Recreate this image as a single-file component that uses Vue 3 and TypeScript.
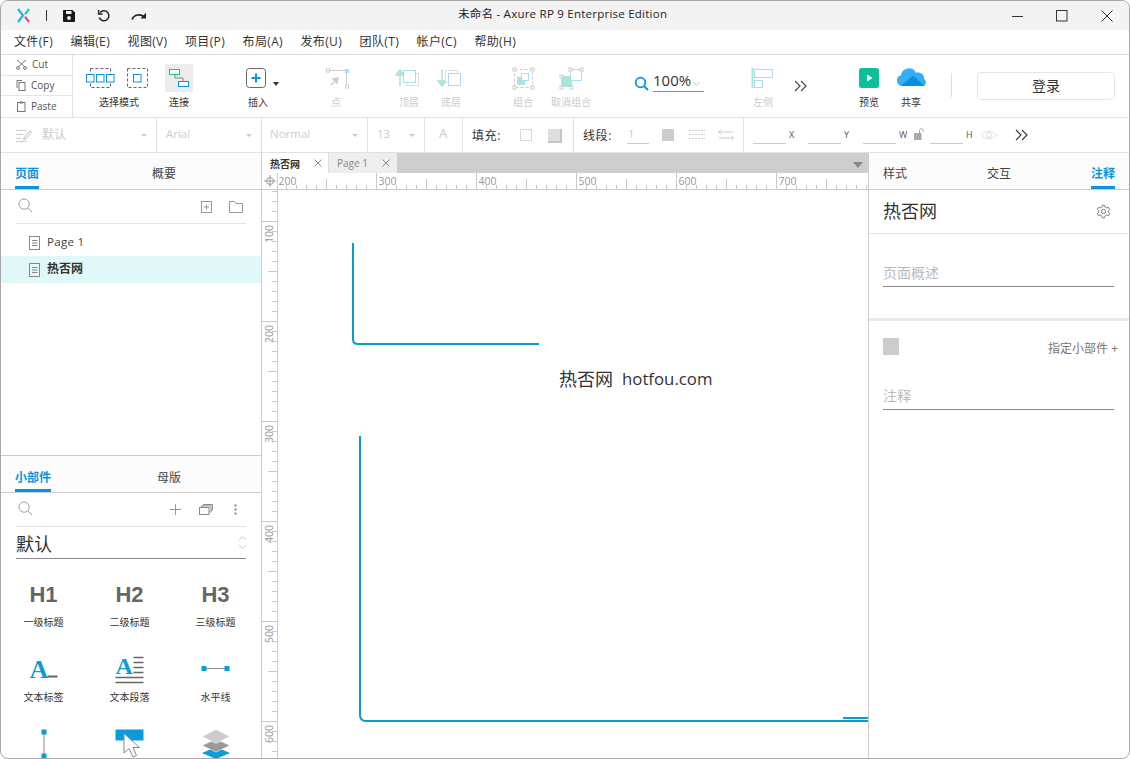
<script setup lang="ts">
const menus = ['文件(F)', '编辑(E)', '视图(V)', '项目(P)', '布局(A)', '发布(U)', '团队(T)', '帐户(C)', '帮助(H)']

const hTicks: { x: number; h: number; label?: number }[] = []
for (let v = 210; v < 800; v += 10) {
  const x = v - 202
  if (v % 100 === 0) hTicks.push({ x, h: 16, label: v })
  else if (v % 50 === 0) hTicks.push({ x, h: 10 })
  else hTicks.push({ x, h: 4 })
}
hTicks.unshift({ x: -2, h: 16, label: 200 })

const vTicks: { y: number; w: number; label?: number }[] = []
for (let v = 70; v < 640; v += 10) {
  const y = v - 69
  if (v % 100 === 0) vTicks.push({ y, w: 15, label: v })
  else if (v % 50 === 0) vTicks.push({ y, w: 9 })
  else vTicks.push({ y, w: 5 })
}

const headings = [
  { h: 'H1', label: '一级标题' },
  { h: 'H2', label: '二级标题' },
  { h: 'H3', label: '三级标题' }
]
</script>

<template>
  <div class="window">
    <header class="titlebar">
      <svg class="logo" width="13" height="15" viewBox="0 0 13 15">
        <path d="M1 1 L6 7.500 L1 14" fill="none" stroke="#19b5e8" stroke-width="2.200" />
        <path d="M12 1 L8 6.400" fill="none" stroke="#1fcfa8" stroke-width="2.200" />
        <path d="M8 8.600 L12 14" fill="none" stroke="#ee3f9b" stroke-width="2.200" />
      </svg>
      <span class="bar-sep"></span>
      <svg class="qa save" width="14" height="14" viewBox="0 0 14 14">
        <path d="M1.500 1 H10.500 L13 3.500 V12 a1 1 0 0 1 -1 1 H2 a1 1 0 0 1 -1 -1 V2 a1 1 0 0 1 .5 -1 Z" fill="#1a1a1a" />
        <rect x="4" y="2" width="5.500" height="3" fill="#f3f3f3" />
        <circle cx="7" cy="9" r="1.900" fill="#f3f3f3" />
      </svg>
      <svg class="qa undo" width="14" height="14" viewBox="0 0 14 14">
        <path d="M3 3.600 A5 5 0 1 1 2.200 8.500" fill="none" stroke="#222" stroke-width="1.500" />
        <path d="M1.600 1 V5 H5.600" fill="none" stroke="#222" stroke-width="1.500" />
      </svg>
      <svg class="qa redo" width="16" height="10" viewBox="0 0 16 10">
        <path d="M1 8.500 C3 3.500 9 2.500 13.500 6" fill="none" stroke="#222" stroke-width="1.600" />
        <path d="M15 1.800 V7.500 H9.500 Z" fill="#222" />
      </svg>
      <div class="title-text">未命名 - Axure RP 9 Enterprise Edition</div>
      <svg class="win min" width="12" height="12" viewBox="0 0 12 12"><path d="M0 6.500 H11" stroke="#333" /></svg>
      <svg class="win max" width="12" height="12" viewBox="0 0 12 12"><rect x=".5" y=".5" width="10.500" height="10.500" fill="none" stroke="#333" /></svg>
      <svg class="win close" width="12" height="12" viewBox="0 0 12 12"><path d="M.5 .5 L11.500 11.500 M11.500 .5 L.5 11.500" stroke="#333" /></svg>
    </header>

    <nav class="menubar">
      <span v-for="m in menus" :key="m" class="menu-item">{{ m }}</span>
    </nav>

    <section class="toolbar">
      <div class="clipboard">
        <div class="clip-row">
          <svg width="11" height="11" viewBox="0 0 11 11"><path d="M1 1 L9 8 M10 1 L2 8" stroke="#777" fill="none" /><circle cx="2" cy="9" r="1.400" fill="none" stroke="#777" /><circle cx="9" cy="9" r="1.400" fill="none" stroke="#777" /></svg>
          <span class="clip-cut">Cut</span>
        </div>
        <div class="clip-row">
          <svg width="11" height="11" viewBox="0 0 11 11"><path d="M1 8 V.5 H6" stroke="#777" fill="none" /><rect x="3" y="2.500" width="6" height="8" fill="none" stroke="#777" /></svg>
          <span>Copy</span>
        </div>
        <div class="clip-row">
          <svg width="11" height="11" viewBox="0 0 11 11"><rect x="1.500" y="1.500" width="7.500" height="9" fill="none" stroke="#777" /><rect x="3.500" y=".5" width="3.500" height="2" fill="#777" /></svg>
          <span>Paste</span>
        </div>
      </div>

      <div class="tool t-select">
        <svg width="66" height="28" viewBox="0 0 66 28">
          <rect x="4.500" y="4.500" width="20" height="19" fill="none" stroke="#666" stroke-dasharray="3 2" />
          <rect x="41.500" y="4.500" width="20" height="19" fill="none" stroke="#666" stroke-dasharray="3 2" />
          <g fill="#fff" stroke="#0a94e0">
            <rect x=".5" y="10.500" width="7.500" height="7.500" /><rect x="10.500" y="10.500" width="7.500" height="7.500" /><rect x="20.500" y="10.500" width="7.500" height="7.500" /><rect x="47.500" y="10.500" width="7.500" height="7.500" />
          </g>
        </svg>
        <span class="tool-label">选择模式</span>
      </div>

      <div class="tool t-connect">
        <svg class="connect-bg" width="28" height="28" viewBox="0 0 28 28">
          <path d="M10 10 V14 H18 V17" fill="none" stroke="#888" />
          <rect x="4.500" y="5.500" width="10" height="5" fill="#fff" stroke="#19bf9a" />
          <rect x="13.500" y="17.500" width="10" height="5" fill="#fff" stroke="#0a94e0" />
        </svg>
        <span class="tool-label">连接</span>
      </div>

      <div class="tool t-insert">
        <svg width="40" height="28" viewBox="0 0 40 28">
          <rect x="8.500" y="4.500" width="19" height="19" rx="3" fill="#fff" stroke="#666" />
          <path d="M18 9.500 V18.500 M13.500 14 H22.500" stroke="#0a94e0" stroke-width="2" />
          <path d="M35 18 H41 L38 22 Z" fill="#333" />
        </svg>
        <span class="tool-label">插入</span>
      </div>

      <div class="tool t-point dim">
        <svg width="40" height="28" viewBox="0 0 40 28">
          <path d="M13 6.500 H30.500 V22" fill="none" stroke="#ccc" />
          <rect x="10.500" y="5" width="3" height="3" fill="#fff" stroke="#ccc" />
          <rect x="29" y="5" width="4" height="4" fill="#a9dcf5" />
          <rect x="29.500" y="21" width="3" height="3" fill="#fff" stroke="#ccc" />
          <path d="M15 21 L22 14 M22 14 L17 15 L21 19 Z" fill="#ccc" stroke="#ccc" stroke-width="1.500" />
        </svg>
        <span class="tool-label">点</span>
      </div>

      <div class="tool t-top dim">
        <svg width="40" height="28" viewBox="0 0 40 28">
          <path d="M11 6 L7 11 H15 Z M11 10 V22" fill="#a8e5da" stroke="#a8e5da" stroke-width="1.500" />
          <rect x="17.500" y="9.500" width="12" height="12" fill="#fff" stroke="#ddd" />
          <rect x="14.500" y="6.500" width="12" height="12" fill="#fff" stroke="#a9dcf5" />
        </svg>
        <span class="tool-label">顶层</span>
      </div>

      <div class="tool t-bottom dim">
        <svg width="40" height="28" viewBox="0 0 40 28">
          <path d="M11 22 L7 17 H15 Z M11 18 V5" fill="#a8e5da" stroke="#a8e5da" stroke-width="1.500" />
          <rect x="14.500" y="6.500" width="12" height="12" fill="#fff" stroke="#ddd" />
          <rect x="17.500" y="9.500" width="12" height="12" fill="#fff" stroke="#a9dcf5" />
        </svg>
        <span class="tool-label">底层</span>
      </div>

      <div class="tool t-group dim">
        <svg width="40" height="28" viewBox="0 0 40 28">
          <rect x="11.500" y="5.500" width="18" height="18" fill="none" stroke="#ccc" stroke-dasharray="3 2" />
          <rect x="14" y="13" width="8" height="8" fill="#a8e5da" />
          <rect x="18.500" y="9.500" width="7" height="7" fill="#fff" stroke="#a9dcf5" />
          <g fill="#fff" stroke="#ccc"><rect x="10" y="4" width="3" height="3" /><rect x="28" y="4" width="3" height="3" /><rect x="10" y="22" width="3" height="3" /><rect x="28" y="22" width="3" height="3" /></g>
        </svg>
        <span class="tool-label">组合</span>
      </div>

      <div class="tool t-ungroup dim">
        <svg width="50" height="28" viewBox="0 0 50 28">
          <rect x="15" y="12" width="11" height="11" fill="#a8e5da" />
          <rect x="24.500" y="5.500" width="11" height="11" fill="#fff" stroke="#a9dcf5" />
          <g fill="#fff" stroke="#ccc"><rect x="14" y="11" width="3" height="3" /><rect x="23" y="4" width="3" height="3" /><rect x="34" y="4" width="3" height="3" /><rect x="14" y="22" width="3" height="3" /><rect x="24" y="22" width="3" height="3" /></g>
        </svg>
        <span class="tool-label">取消组合</span>
      </div>

      <div class="zoom-box">
        <svg width="15" height="15" viewBox="0 0 15 15"><circle cx="6.500" cy="6.500" r="4.800" fill="none" stroke="#0a94e0" stroke-width="1.800" /><path d="M10 10 L14 14" stroke="#0a94e0" stroke-width="2" /></svg>
        <div class="zoom-val">
          <span>100%</span>
          <svg width="9" height="6" viewBox="0 0 9 6"><path d="M1 1 L4.500 4.500 L8 1" fill="none" stroke="#ccc" /></svg>
        </div>
      </div>

      <div class="tool t-left dim">
        <svg width="40" height="28" viewBox="0 0 40 28">
          <path d="M9.500 4 V24" stroke="#a8e5da" stroke-width="2" />
          <rect x="11.500" y="5.500" width="18" height="8" fill="#fff" stroke="#a9dcf5" />
          <rect x="11.500" y="16.500" width="8" height="7" fill="#fff" stroke="#a9dcf5" />
        </svg>
        <span class="tool-label">左侧</span>
      </div>

      <svg class="more" width="14" height="12" viewBox="0 0 14 12"><path d="M1 1 L6 6 L1 11 M7 1 L12 6 L7 11" fill="none" stroke="#444" stroke-width="1.100" /></svg>

      <div class="tool t-preview">
        <svg width="40" height="28" viewBox="0 0 40 28">
          <rect x="10" y="4" width="20" height="20" rx="2.500" fill="#0fbf9b" />
          <path d="M18 10.500 L23.500 14 L18 17.500 Z" fill="#fff" />
        </svg>
        <span class="tool-label">预览</span>
      </div>

      <div class="tool t-share">
        <svg width="40" height="28" viewBox="0 0 40 28">
          <path d="M11 22 a5.500 5.500 0 0 1 -1 -10.800 a8 8 0 0 1 15 -2.500 a6 6 0 0 1 8 6 a4 4 0 0 1 -1 7.300 Z" fill="#35aef5" />
          <path d="M10 22 L22 11.500 L34 22 Z" fill="#0a8fe0" />
        </svg>
        <span class="tool-label">共享</span>
      </div>

      <span class="tool-sep"></span>
      <button class="login" type="button"><span>登录</span></button>
    </section>

    <section class="formatbar">
      <div class="seg s-style">
        <svg width="16" height="14" viewBox="0 0 16 14"><path d="M0 2.500 H10 M0 6.500 H7 M0 10.500 H5 M0 13.500 H11" stroke="#ccc" /><path d="M8 10 L14 3 L15.500 4.500 L9.500 11 L7.500 11.500 Z" fill="#fff" stroke="#bbb" /></svg>
        <span class="ghost ghost-style">默认</span>
        <i class="caret"></i>
      </div>
      <div class="seg s-font"><span class="ghost">Arial</span><i class="caret"></i></div>
      <div class="seg s-weight"><span class="ghost">Normal</span><i class="caret"></i></div>
      <div class="seg s-size"><span class="ghost">13</span><i class="caret"></i></div>
      <div class="seg s-color"><span class="ghost ghost-a">A</span></div>
      <div class="seg s-fill">
        <span class="fmt-label">填充:</span>
        <span class="swatch empty"></span>
        <span class="swatch shadow"></span>
      </div>
      <div class="seg s-line">
        <span class="fmt-label">线段:</span>
        <span class="num-input">1</span>
        <span class="swatch solid"></span>
        <svg class="dash" width="16" height="12" viewBox="0 0 16 12"><path d="M0 1.500 H16 M0 5.500 H16 M0 9.500 H16" stroke="#ccc" stroke-dasharray="2 1" /></svg>
        <svg class="arrows" width="16" height="12" viewBox="0 0 16 12"><path d="M3 .5 L.5 3 L3 5.500 M.5 3 H15 M13 6.500 L15.500 9 L13 11.500 M15.500 9 H1" fill="none" stroke="#ccc" /></svg>
      </div>
      <div class="seg s-pos">
        <span class="pos-input"></span><span class="pos-l">X</span>
        <span class="pos-input"></span><span class="pos-l">Y</span>
        <span class="pos-input"></span><span class="pos-l">W</span>
        <svg class="lock" width="10" height="13" viewBox="0 0 10 13"><rect x="0" y="5" width="7.500" height="7" fill="#aaa" /><path d="M5.500 5 V2.500 a1.800 1.800 0 0 1 3.600 0 V4" fill="none" stroke="#aaa" /></svg>
        <span class="pos-input"></span><span class="pos-l">H</span>
        <svg class="eye" width="16" height="10" viewBox="0 0 16 10"><path d="M.5 5 Q8 -3 15.500 5 Q8 13 .5 5 Z" fill="none" stroke="#ddd" /><circle cx="8" cy="5" r="2.400" fill="none" stroke="#ddd" /></svg>
        <svg class="more2" width="14" height="12" viewBox="0 0 14 12"><path d="M1 1 L6 6 L1 11 M7 1 L12 6 L7 11" fill="none" stroke="#333" stroke-width="1.100" /></svg>
      </div>
    </section>

    <main class="workspace">
      <aside class="left">
        <div class="pages">
          <div class="tabs">
            <span class="tab active">页面</span>
            <span class="tab tab-overview">概要</span>
          </div>
          <div class="search-row">
            <svg width="15" height="15" viewBox="0 0 16 16"><circle cx="6.500" cy="6.500" r="5.500" fill="none" stroke="#999" /><path d="M10.500 10.500 L15 15" stroke="#999" /></svg>
            <svg class="add-page" width="11" height="12" viewBox="0 0 11 12"><rect x=".5" y=".5" width="10" height="11" fill="none" stroke="#999" /><path d="M5.500 3.500 V8.500 M3 6 H8" stroke="#999" /></svg>
            <svg class="folder" width="14" height="12" viewBox="0 0 14 12"><path d="M.5 11 V.5 H5.500 L7 2.500 H13.500 V11.500 H.5 Z" fill="none" stroke="#999" /></svg>
          </div>
          <div class="page-row">
            <svg width="12" height="14" viewBox="0 0 12 14"><rect x=".5" y=".5" width="10" height="13" fill="none" stroke="#888" /><path d="M3 4.500 H8.500 M3 7 H8.500 M3 9.500 H8.500" stroke="#888" /></svg>
            <span>Page 1</span>
          </div>
          <div class="page-row selected">
            <svg width="12" height="14" viewBox="0 0 12 14"><rect x=".5" y=".5" width="10" height="13" fill="none" stroke="#888" /><path d="M3 4.500 H8.500 M3 7 H8.500 M3 9.500 H8.500" stroke="#888" /></svg>
            <span>热否网</span>
          </div>
        </div>

        <div class="widgets">
          <div class="tabs">
            <span class="tab active">小部件</span>
            <span class="tab tab-masters">母版</span>
          </div>
          <div class="search-row w-search">
            <svg width="15" height="15" viewBox="0 0 16 16"><circle cx="6.500" cy="6.500" r="5.500" fill="none" stroke="#999" /><path d="M10.500 10.500 L15 15" stroke="#999" /></svg>
            <svg class="w-plus" width="11" height="11" viewBox="0 0 11 11"><path d="M5.500 0 V11 M0 5.500 H11" stroke="#999" /></svg>
            <svg class="w-copy" width="14" height="11" viewBox="0 0 14 11"><rect x=".5" y="3.500" width="9.500" height="7" fill="#fff" stroke="#888" /><path d="M2.500 3.500 V1.900 H12 V8 H10 M4.500 1.900 V.5 H13.500 V6 H12" fill="none" stroke="#888" /></svg>
            <svg class="w-dots" width="3" height="11" viewBox="0 0 3 11"><circle cx="1.500" cy="1.500" r="1.200" fill="#999" /><circle cx="1.500" cy="5.500" r="1.200" fill="#999" /><circle cx="1.500" cy="9.500" r="1.200" fill="#999" /></svg>
          </div>
          <div class="lib-select">
            <span>默认</span>
            <svg width="9" height="15" viewBox="0 0 9 15"><path d="M1 5 L4.500 1.500 L8 5 M1 10 L4.500 13.500 L8 10" fill="none" stroke="#ccc" /></svg>
          </div>
          <div class="widget-grid">
            <div v-for="w in headings" :key="w.h" class="widget">
              <div class="w-icon heading"><span>{{ w.h }}</span></div>
              <div class="w-label">{{ w.label }}</div>
            </div>
            <div class="widget">
              <div class="w-icon">
                <svg width="30" height="36" viewBox="0 0 30 36">
                  <text x=".5" y="23.500" class="serif-a">A</text>
                  <rect x="18.500" y="21.500" width="10" height="2" fill="#666" />
                </svg>
              </div>
              <div class="w-label">文本标签</div>
            </div>
            <div class="widget">
              <div class="w-icon">
                <svg width="30" height="36" viewBox="0 0 30 36">
                  <text x=".5" y="19.500" class="serif-a small">A</text>
                  <path d="M18.500 3.500 H28.500 M18.500 8.500 H28.500 M18.500 13.500 H28.500 M18.500 18.500 H28.500 M.5 23.500 H28.500 M.5 28.500 H28.500" stroke="#666" stroke-width="1.600" />
                </svg>
              </div>
              <div class="w-label">文本段落</div>
            </div>
            <div class="widget">
              <div class="w-icon">
                <svg width="30" height="36" viewBox="0 0 30 36">
                  <path d="M3 14.500 H26" stroke="#888" />
                  <rect x=".5" y="12" width="5" height="5" fill="#0a9bd8" />
                  <rect x="23.500" y="12" width="5" height="5" fill="#0a9bd8" />
                </svg>
              </div>
              <div class="w-label">水平线</div>
            </div>
            <div class="widget">
              <div class="w-icon">
                <svg width="8" height="36" viewBox="0 0 8 36">
                  <path d="M4 3 V27" stroke="#888" />
                  <rect x="1.500" y=".5" width="5" height="5" fill="#0a9bd8" />
                  <rect x="1.500" y="24.500" width="5" height="5" fill="#0a9bd8" />
                </svg>
              </div>
            </div>
            <div class="widget">
              <div class="w-icon">
                <svg width="30" height="36" viewBox="0 0 30 36">
                  <rect x=".5" y=".5" width="28" height="11" fill="#0a9bd8" />
                  <path d="M9 4.500 L9 24 L14 19.500 L18 28 L21.500 26.500 L18 18.500 L24.500 18.500 Z" fill="#fff" stroke="#888" />
                </svg>
              </div>
            </div>
            <div class="widget">
              <div class="w-icon">
                <svg width="30" height="36" viewBox="0 0 30 36">
                  <path d="M15 18 L29 24 L15 30 L1 24 Z" fill="#0a9bd8" />
                  <path d="M15 10 L29 16.500 L15 23 L1 16.500 Z" fill="#999" stroke="#fff" stroke-width=".6" />
                  <path d="M15 .5 L29 7.500 L15 14.500 L1 7.500 Z" fill="#ccc" stroke="#fff" stroke-width=".6" />
                </svg>
              </div>
            </div>
          </div>
        </div>
      </aside>

      <div class="center">
        <div class="doc-tabs">
          <div class="doc-tab current"><span>热否网</span><svg width="8" height="8" viewBox="0 0 8 8"><path d="M.5 .5 L7.500 7.500 M7.500 .5 L.5 7.500" stroke="#888" /></svg></div>
          <div class="doc-tab other"><span>Page 1</span><svg width="8" height="8" viewBox="0 0 8 8"><path d="M.5 .5 L7.500 7.500 M7.500 .5 L.5 7.500" stroke="#888" /></svg></div>
          <i class="doc-caret"></i>
        </div>
        <div class="h-ruler">
          <div class="ruler-corner">
            <svg width="12" height="12" viewBox="0 0 12 12"><circle cx="6" cy="6" r="3.500" fill="none" stroke="#999" /><path d="M6 0 V12 M0 6 H12" stroke="#999" /></svg>
          </div>
          <svg class="h-svg" width="591" height="16" viewBox="0 0 591 16">
            <template v-for="t in hTicks" :key="t.x">
              <path :d="`M${t.x + 0.5} ${16 - t.h} V16`" stroke="#c8c8c8" />
              <text v-if="t.label" :x="t.x + 2.5" y="12" class="ruler-text">{{ t.label }}</text>
            </template>
          </svg>
        </div>
        <div class="canvas-row">
          <svg class="v-ruler" width="15" height="568" viewBox="0 0 15 568">
            <template v-for="t in vTicks" :key="t.y">
              <path :d="`M${15 - t.w} ${t.y + 0.5} H15`" stroke="#c8c8c8" />
              <text v-if="t.label" x="0" y="0" class="ruler-text" text-anchor="end" :transform="`translate(11 ${t.y + 4}) rotate(-90)`">{{ t.label }}</text>
            </template>
          </svg>
          <div class="canvas">
            <svg class="drawing" width="590" height="568" viewBox="0 0 590 568">
              <path d="M75 53 V149 Q75 154 80 154 H261" fill="none" stroke="#0a9bd0" stroke-width="2" />
              <path d="M82 246 V525 Q82 531 88 531 H590" fill="none" stroke="#0a9bd0" stroke-width="2" />
              <path d="M565 528 H590" fill="none" stroke="#0a9bd0" stroke-width="2" />
            </svg>
            <div class="canvas-label"><span class="cl-cn">热否网</span><span class="cl-en">hotfou.com</span></div>
          </div>
        </div>
      </div>

      <aside class="right">
        <div class="tabs tabs-right">
          <span class="tab">样式</span>
          <span class="tab">交互</span>
          <span class="tab active">注释</span>
        </div>
        <div class="page-title">
          <span>热否网</span>
          <svg width="15" height="15" viewBox="0 0 24 24"><path d="M10 2 H14 L14.600 5 L17 6.300 L20 5.200 L22 8.800 L19.700 10.700 V13.300 L22 15.200 L20 18.800 L17 17.700 L14.600 19 L14 22 H10 L9.400 19 L7 17.700 L4 18.800 L2 15.200 L4.300 13.300 V10.700 L2 8.800 L4 5.200 L7 6.300 L9.400 5 Z" fill="none" stroke="#777" stroke-width="1.500" stroke-linejoin="round" /><circle cx="12" cy="12" r="3.500" fill="none" stroke="#777" stroke-width="1.500" /></svg>
        </div>
        <div class="notes-top">
          <div class="note-field">页面概述</div>
        </div>
        <div class="notes-bottom">
          <div class="assign">
            <span class="assign-sq"></span>
            <span class="assign-text">指定小部件 +</span>
          </div>
          <div class="note-field note-second">注释</div>
        </div>
      </aside>
    </main>
  </div>
</template>

<style>
html, body { margin: 0; background: #fff; }
</style>

<style scoped>
* { box-sizing: border-box; }
svg { display: block; flex: none; }
.window {
  width: 1130px; height: 759px; display: flex; flex-direction: column; overflow: hidden;
  background: #fff; border: 1px solid #a8a8a8; border-radius: 8px;
  font-family: "Open Sans", "Noto Sans CJK SC", sans-serif; font-size: 12px; color: #333;
}

.titlebar { height: 29px; flex: none; background: #f3f3f3; display: flex; align-items: center; position: relative; }
.logo { margin-left: 16px; }
.bar-sep { width: 1px; height: 11px; background: #333; margin-left: 16px; }
.qa.save { margin-left: 15px; }
.qa.undo { margin-left: 21px; }
.qa.redo { margin-left: 20px; }
.title-text { position: absolute; left: 457px; top: 4px; font-size: 11.5px; line-height: 17px; color: #222; letter-spacing: .24px; white-space: nowrap; }
.win.min { margin-left: auto; }
.win.max { margin-left: 32px; }
.win.close { margin-left: 33px; margin-right: 16px; }

.menubar { height: 25px; flex: none; border-bottom: 1px solid #ddd; display: flex; align-items: center; padding-left: 13px; gap: 17.5px; }
.menu-item { font-size: 12px; line-height: 18px; color: #333; white-space: nowrap; letter-spacing: .35px; }

.toolbar { height: 63px; flex: none; border-bottom: 1px solid #e2e2e2; display: flex; align-items: flex-start; }
.clipboard { width: 72px; height: 62px; border-right: 1px solid #e2e2e2; flex: none; display: flex; flex-direction: column; }
.clip-row { height: 21px; display: flex; align-items: center; padding-left: 15px; gap: 4px; border-bottom: 1px solid #e4e4e4; font-size: 10px; color: #555; }
.clip-row:last-child { border-bottom: 0; }
.clip-row span { margin-top: -2px; }
.clip-cut { margin-left: 1px; }

.tool { display: flex; flex-direction: column; align-items: center; padding-top: 9px; flex: none; width: 40px; }
.tool svg { overflow: visible; }
.tool-label { font-size: 10px; line-height: 14px; margin-top: 3px; white-space: nowrap; color: #333; }
.dim .tool-label { color: #ccc; }
.t-select { width: 66px; margin-left: 13px; }
.t-connect { width: 28px; margin-left: 13px; }
.connect-bg { background: #ececec; }
.t-insert { margin-left: 45px; }
.t-point { margin-left: 38px; }
.t-top { margin-left: 33px; }
.t-bottom { margin-left: 2px; }
.t-group { margin-left: 32px; }
.t-ungroup { width: 50px; margin-left: 3px; }
.zoom-box { display: flex; align-items: center; margin-left: 38px; margin-top: 17px; gap: 4px; width: 70px; flex: none; }
.zoom-box > svg { margin-top: 2px; }
.zoom-val { display: flex; align-items: center; justify-content: space-between; width: 51px; height: 20px; border-bottom: 1px solid #888; font-size: 15px; line-height: 18px; color: #333; }
.zoom-val span { margin-top: -3px; }
.zoom-val svg { margin-top: 5px; margin-right: 3px; }
.t-left { margin-left: 39px; }
.more { margin-left: 11px; margin-top: 25px; }
.t-preview { margin-left: 41px; }
.t-share { margin-left: 2px; }
.tool-sep { width: 1px; height: 24px; background: #ddd; margin-left: 20px; margin-top: 18px; flex: none; }
.login { width: 138px; height: 28px; margin-left: 25px; margin-top: 17px; flex: none; background: #fff; border: 1px solid #e6e6e6; border-radius: 4px; font: inherit; font-size: 14px; color: #333; padding: 0; display: flex; align-items: center; justify-content: center; }
.login span { margin-top: -2px; }

.formatbar { height: 35px; flex: none; border-bottom: 1px solid #e2e2e2; display: flex; align-items: stretch; }
.seg { display: flex; align-items: center; border-right: 1px solid #e2e2e2; position: relative; flex: none; }
.seg:last-child { border-right: 0; }
.s-style { width: 156px; padding-left: 15px; }
.s-font { width: 105px; padding-left: 9px; }
.s-weight { width: 106px; padding-left: 8px; }
.s-size { width: 57px; padding-left: 9px; }
.s-color { width: 38px; padding-left: 14px; }
.s-fill { width: 111px; padding-left: 9px; }
.s-line { width: 170px; padding-left: 9px; }
.s-pos { flex: 1; padding-left: 9px; }
.ghost { color: #ccc; font-size: 11.5px; margin-top: -3px; }
.ghost-style { margin-left: 10px; font-size: 12px; }
.ghost-a { font-size: 13px; margin-top: -4px; }
.caret { position: absolute; right: 9px; top: 16px; width: 0; height: 0; border-left: 3px solid transparent; border-right: 3px solid transparent; border-top: 3px solid #ccc; }
.fmt-label { font-size: 12px; color: #333; letter-spacing: .6px; white-space: nowrap; }
.swatch { width: 12px; height: 12px; flex: none; }
.swatch.empty { border: 1px solid #d8d8d8; margin-left: 19px; }
.swatch.shadow { background: #dedede; box-shadow: 1px 1px 0 1px #c4c4c4; margin-left: 16px; }
.num-input { width: 22px; height: 18px; margin-left: 15px; border-bottom: 1px solid #ccc; color: #ccc; font-size: 11px; padding-left: 1px; line-height: 15px; flex: none; }
.swatch.solid { background: #ccc; margin-left: 13px; }
.dash { margin-left: 15px; }
.arrows { margin-left: 13px; }
.pos-input { width: 33px; height: 18px; border-bottom: 1px solid #ccc; flex: none; }
.pos-l { font-size: 9px; color: #555; width: 22px; padding-left: 3px; flex: none; margin-top: -1px; }
.lock { margin-left: -4px; margin-right: 6px; margin-top: -1px; }
.eye { margin-left: -4px; }
.more2 { margin-left: 18px; }

.workspace { flex: 1; min-height: 0; display: flex; }
.left { width: 261px; flex: none; border-right: 1px solid #ccc; display: flex; flex-direction: column; }
.pages { height: 303px; flex: none; border-bottom: 1px solid #ccc; }
.widgets { flex: 1; min-height: 0; overflow: hidden; }

.tabs { height: 37px; background: #fcfcfc; border-bottom: 1px solid #ccc; display: flex; padding-left: 14px; }
.tab { height: 36px; padding-top: 12px; line-height: 18px; font-size: 12px; border-bottom: 3px solid transparent; color: #444; white-space: nowrap; }
.widgets .tab { padding-top: 13px; }
.tab.active { color: #0a94e0; font-weight: 700; border-bottom-color: #0a94e0; }
.tab-overview { margin-left: 113px; }
.tab-masters { margin-left: 106px; }
.tabs-right { justify-content: space-between; padding: 0 14px; }

.search-row { height: 34px; margin: 0 15px; border-bottom: 1px solid #e4e4e4; display: flex; align-items: center; padding-left: 2px; }
.search-row > svg:first-child { margin-top: -3px; }
.add-page { margin-left: 168px; }
.folder { margin-left: 17px; }
.page-row { height: 27px; display: flex; align-items: center; padding-left: 28px; gap: 6px; font-size: 11.5px; color: #444; letter-spacing: .3px; }
.search-row + .page-row { margin-top: 5px; }
.page-row span { margin-top: -2px; }
.page-row.selected { background: #e0f8f8; font-weight: 700; color: #333; font-size: 12px; letter-spacing: 0; }
.page-row.selected span { margin-top: -4px; }

.w-search { height: 34px; }
.w-plus { margin-left: 137px; }
.w-copy { margin-left: 18px; }
.w-dots { margin-left: 21px; }
.lib-select { height: 32px; margin: 0 15px 19px; border-bottom: 1px solid #888; display: flex; align-items: center; justify-content: space-between; font-size: 18px; line-height: 24px; color: #333; }
.lib-select span { margin-top: 3px; }
.lib-select svg { margin-right: -1px; }
.widget-grid { display: grid; grid-template-columns: 85px 87px 85px; grid-auto-rows: 75px; }
.widget { display: flex; flex-direction: column; align-items: center; }
.w-icon { height: 37px; display: flex; align-items: center; justify-content: center; }
.heading { font-family: "Liberation Sans", Arial, sans-serif; font-weight: 700; font-size: 22px; color: #666; }
.heading span { margin-top: -3px; }
.w-label { font-size: 10px; line-height: 14px; color: #333; white-space: nowrap; }
.serif-a { font-family: "Liberation Serif", serif; font-weight: 700; font-size: 26px; fill: #0a9bd8; }
.serif-a.small { font-size: 24px; }

.center { flex: 1; min-width: 0; display: flex; flex-direction: column; }
.doc-tabs { height: 20px; flex: none; background: #cecece; display: flex; position: relative; }
.doc-tab { display: flex; align-items: center; font-size: 10px; white-space: nowrap; }
.doc-tab.current { width: 67px; background: #fff; padding-left: 8px; font-weight: 700; color: #333; border-right: 1px solid #ddd; }
.doc-tab.other { width: 68px; background: #eee; padding-left: 8px; color: #888; }
.doc-tab svg { margin-left: 14px; }
.doc-caret { position: absolute; right: 5px; top: 9px; width: 0; height: 0; border-left: 5px solid transparent; border-right: 5px solid transparent; border-top: 6px solid #888; }
.h-ruler { height: 17px; flex: none; border-bottom: 1px solid #ccc; display: flex; }
.ruler-corner { width: 16px; flex: none; border-right: 1px solid #ccc; display: flex; align-items: center; justify-content: center; }
.ruler-text { font-family: "Open Sans", sans-serif; font-size: 10.5px; fill: #999; }
.canvas-row { flex: 1; min-height: 0; display: flex; }
.v-ruler { box-sizing: content-box; border-right: 1px solid #ccc; }
.canvas { flex: 1; position: relative; overflow: hidden; background: #fff; }
.drawing { position: absolute; left: 0; top: 0; }
.canvas-label { position: absolute; left: 281px; top: 176px; display: flex; align-items: center; gap: 9px; line-height: 26px; color: #333; white-space: nowrap; }
.cl-cn { font-size: 18px; }
.cl-en { font-size: 16.8px; }

.right { width: 261px; flex: none; border-left: 1px solid #ccc; display: flex; flex-direction: column; }
.page-title { height: 44px; flex: none; padding: 0 18px 0 14px; border-bottom: 1px solid #e4e4e4; display: flex; align-items: center; justify-content: space-between; font-size: 18px; line-height: 24px; color: #333; }
.page-title span { margin-top: -1px; }
.notes-top { height: 87px; flex: none; border-bottom: 3px solid #e8e8e8; padding: 0 15px 0 14px; }
.note-field { height: 31px; margin-top: 22px; border-bottom: 1px solid #888; color: #bbb; font-size: 14px; line-height: 33px; }
.notes-bottom { padding: 0 15px 0 14px; }
.assign { display: flex; justify-content: space-between; align-items: flex-start; margin-top: 17px; }
.assign-sq { width: 16px; height: 17px; background: #ccc; }
.assign-text { font-size: 12px; line-height: 18px; color: #777; margin-top: 2px; margin-right: -4px; }
.note-second { margin-top: 21px; }
</style>
